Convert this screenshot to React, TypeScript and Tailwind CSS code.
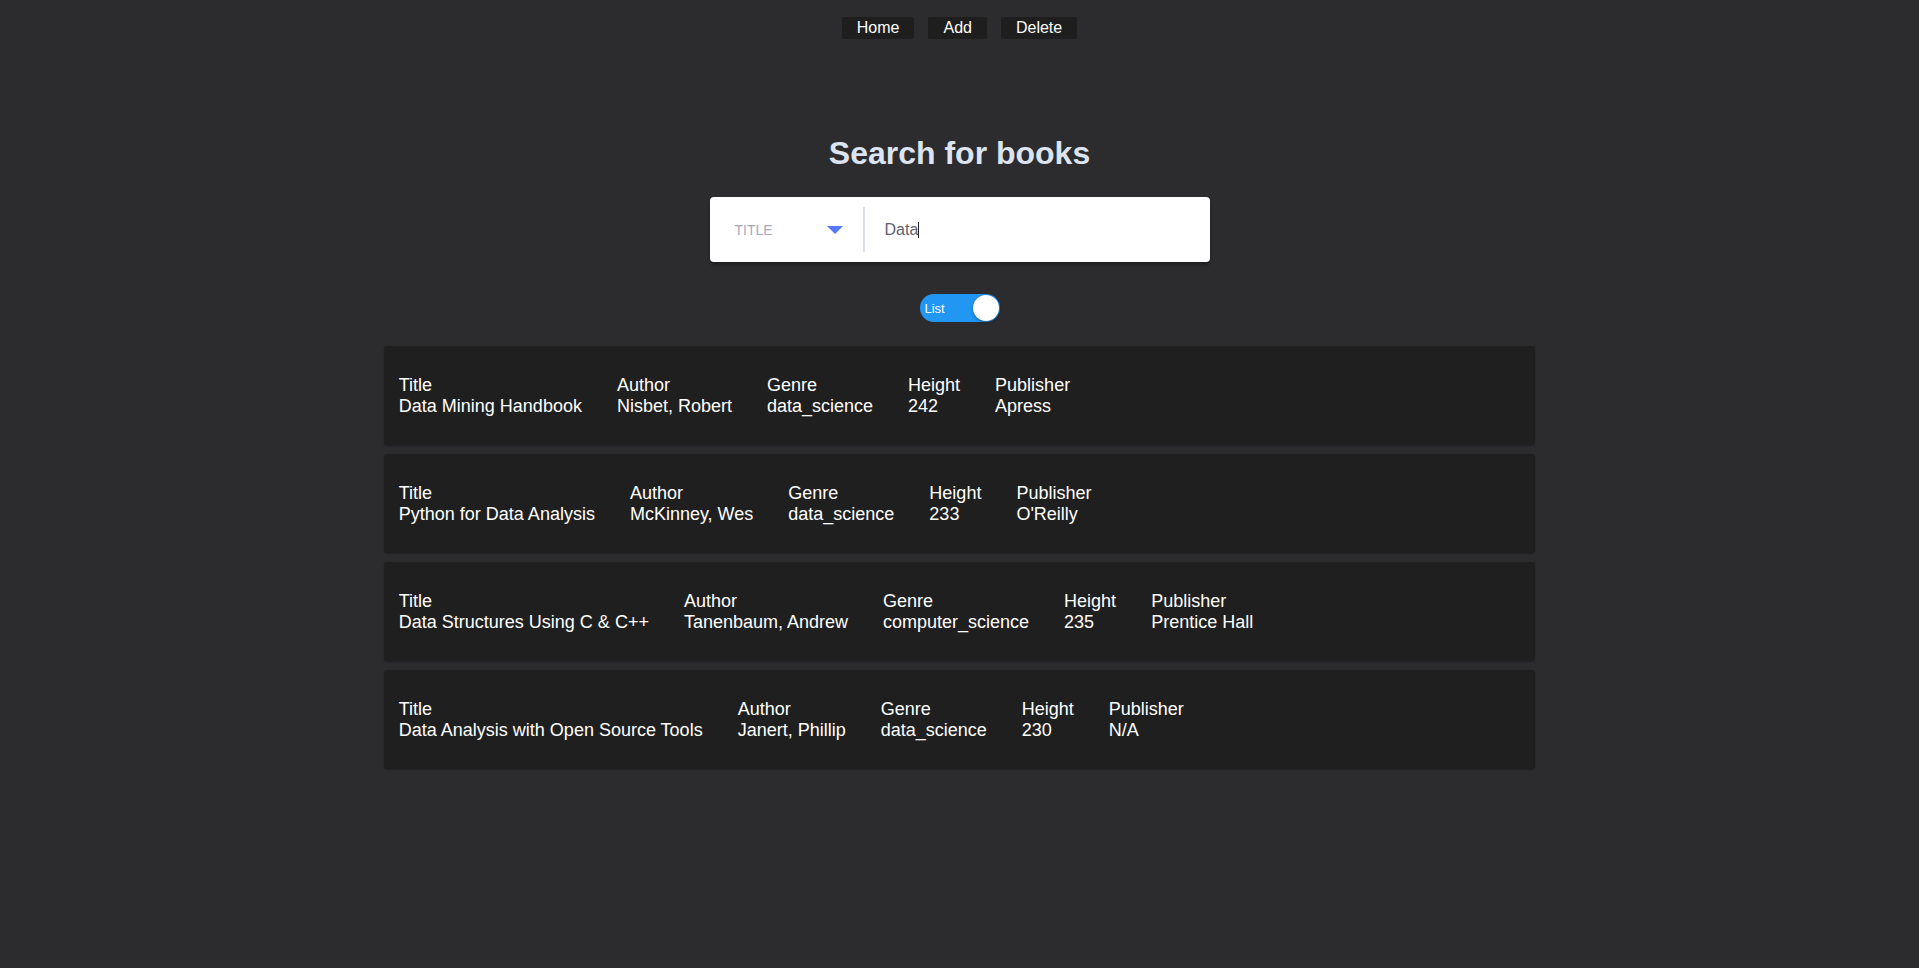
import React from 'react'

const books = [
    { title: 'Data Mining Handbook', author: 'Nisbet, Robert', genre: 'data_science', height: '242', publisher: 'Apress' },
    { title: 'Python for Data Analysis', author: 'McKinney, Wes', genre: 'data_science', height: '233', publisher: "O'Reilly" },
    { title: 'Data Structures Using C & C++', author: 'Tanenbaum, Andrew', genre: 'computer_science', height: '235', publisher: 'Prentice Hall' },
    { title: 'Data Analysis with Open Source Tools', author: 'Janert, Phillip', genre: 'data_science', height: '230', publisher: 'N/A' },
]

const Field = ({ label, value }: { label: string; value: string }) => (
    <div className="flex flex-col">
        <span>{label}</span>
        <span>{value}</span>
    </div>
)

const App = () => {
    return (
        <div className="min-h-[968px] bg-[#2c2c2f] font-['Liberation_Sans',Arial,sans-serif] text-white">
            <nav className="flex justify-center gap-[14px] pt-[17px]">
                {['Home', 'Add', 'Delete'].map((item) => (
                    <button key={item} className="h-[22px] px-[15px] text-[16px] leading-[22px] bg-[#1e1e1e] rounded-[2px] text-white">
                        {item}
                    </button>
                ))}
            </nav>

            <h1 className="mt-[96px] text-center text-[32px] font-bold text-[#dde4f1] leading-[37px]">
                Search for books
            </h1>

            <div className="mx-auto mt-[25px] w-[500px] h-[65px] bg-white rounded-[4px] shadow-[0_2px_3px_rgba(0,0,0,0.35)] flex items-center">
                <div className="w-[153px] flex items-center justify-between pl-[25px] pr-[20px]">
                    <span className="text-[14px] text-[#a5a9bd] leading-none">TITLE</span>
                    <svg width="16" height="8" viewBox="0 0 16 8" className="mt-[1px]">
                        <polygon points="0,0 16,0 8,8" fill="#5579f5" />
                    </svg>
                </div>
                <div className="w-[2px] h-[45px] bg-[#d9deeb]" />
                <div className="flex items-center pl-[20px] text-[16px] text-[#5f6270]">
                    <span>Data</span>
                    <span className="w-[1px] h-[16px] bg-[#222]" />
                </div>
            </div>

            <div className="flex justify-center mt-[32px]">
                <div className="relative w-[80px] h-[28px] rounded-full bg-[#2196f3] flex items-center">
                    <span className="pl-[5px] pt-[2px] text-[13px] font-medium text-white">List</span>
                    <span className="absolute right-[1px] top-[1px] w-[26px] h-[26px] rounded-full bg-white shadow-[0_1px_3px_rgba(0,0,0,0.4)]" />
                </div>
            </div>

            <div className="w-[60%] mx-auto mt-[24px] flex flex-col gap-[9px]">
                {books.map((b) => (
                    <div key={b.title} className="h-[99px] bg-[#1f1f1f] rounded-[3px] shadow-[0_1px_2px_rgba(0,0,0,0.25)] flex items-center gap-[35px] pl-[15px] text-[18px] leading-[21px]">
                        <Field label="Title" value={b.title} />
                        <Field label="Author" value={b.author} />
                        <Field label="Genre" value={b.genre} />
                        <Field label="Height" value={b.height} />
                        <Field label="Publisher" value={b.publisher} />
                    </div>
                ))}
            </div>
        </div>
    )
}

export default App
